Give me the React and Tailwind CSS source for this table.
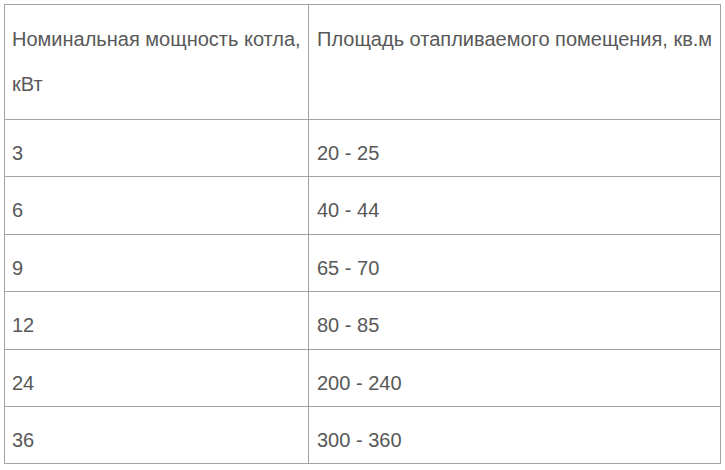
const rows = [
  { power: "3", area: "20 - 25", h: "h-[57px]" },
  { power: "6", area: "40 - 44", h: "h-[58px]" },
  { power: "9", area: "65 - 70", h: "h-[57px]" },
  { power: "12", area: "80 - 85", h: "h-[58px]" },
  { power: "24", area: "200 - 240", h: "h-[57px]" },
  { power: "36", area: "300 - 360", h: "h-[57px]" },
];

export default function App() {
  return (
    <div className="w-[725px] h-[470px] bg-white pl-[4px] pt-[4px] font-['Liberation_Sans',Arial,sans-serif] text-[20px] text-[#585858]">
      <div className="w-[717px] border-t border-l border-[#a3a3a3] grid grid-cols-[304px_412px]">
        <div className="h-[115px] border-r border-b border-[#a3a3a3] pl-[7px] pt-[12px] leading-[45px]">
          Номинальная мощность котла, кВт
        </div>
        <div className="h-[115px] border-r border-b border-[#a3a3a3] pl-[8px] pt-[12px] leading-[45px]">
          Площадь отапливаемого помещения, кв.м
        </div>
        {rows.map((row) => (
          <div key={row.power} className="contents">
            <div className={`${row.h} border-r border-b border-[#a3a3a3] pl-[7px] pt-[11px] leading-[45px]`}>
              {row.power}
            </div>
            <div className={`${row.h} border-r border-b border-[#a3a3a3] pl-[8px] pt-[11px] leading-[45px]`}>
              {row.area}
            </div>
          </div>
        ))}
      </div>
    </div>
  );
}
